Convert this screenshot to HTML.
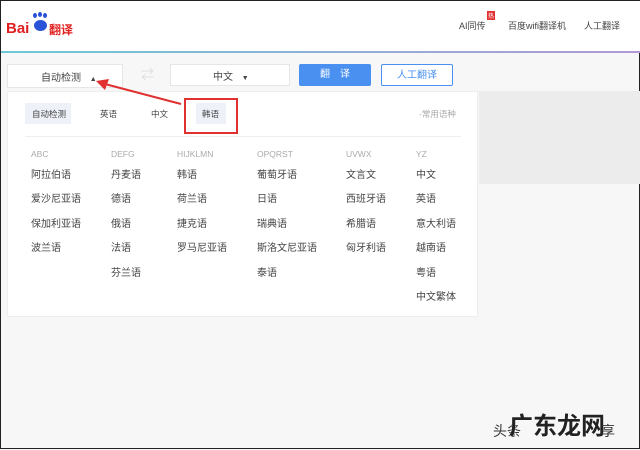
<!DOCTYPE html>
<html><head><meta charset="utf-8"><style>
*{margin:0;padding:0;box-sizing:border-box}
body{width:640px;height:449px;overflow:hidden;background:#f7f7f7;font-family:"Liberation Sans","Noto Sans CJK SC",sans-serif;position:relative;border:1px solid #222}
.a{position:absolute}
.hd{left:0;top:0;width:640px;height:51px;background:#fff}
.line{left:0;top:50px;width:640px;height:2px;background:linear-gradient(90deg,#6cc9d6,#b29ad6)}
.t{font-size:10px;color:#444;white-space:nowrap}
.h{font-size:8.5px;color:#aaa}
</style></head><body>
<div class="a hd"></div><div class="a line"></div>
<div class="a" style="left:5px;top:19px;font-size:15px;font-weight:bold;color:#e02020">Bai</div>
<div class="a" style="left:31px;top:12px;width:16px;height:20px">
<div class="a" style="left:1px;top:0;width:4px;height:5px;border-radius:50%;background:#2a52d8"></div>
<div class="a" style="left:6px;top:-1px;width:4px;height:5px;border-radius:50%;background:#2a52d8"></div>
<div class="a" style="left:11px;top:0;width:4px;height:5px;border-radius:50%;background:#2a52d8"></div>
<div class="a" style="left:2px;top:7px;width:13px;height:11px;border-radius:50%;background:#2a52d8"></div></div>
<div class="a" style="left:48px;top:20px;font-size:12px;font-weight:bold;color:#e02020">翻译</div>
<div class="a t" style="left:458px;top:18px;font-size:9px">AI同传</div>
<div class="a" style="left:486px;top:10px;width:8px;height:9px;background:#e03030;color:#fff;font-size:6px;text-align:center">热</div>
<div class="a t" style="left:507px;top:18px;font-size:9px">百度wifi翻译机</div>
<div class="a t" style="left:583px;top:18px;font-size:9px">人工翻译</div>
<div class="a" style="left:478px;top:90px;width:162px;height:93px;background:#ececec"></div>
<div class="a" style="left:6px;top:63px;width:116px;height:24px;background:#fff;border:1px solid #e6e6e6"></div>
<div class="a t" style="left:40px;top:68px">自动检测 <span style="font-size:7px;margin-left:6px">▲</span></div>
<div class="a" style="left:140px;top:63px;font-size:13px;color:#ddd">⇄</div>
<div class="a" style="left:169px;top:63px;width:120px;height:22px;background:#fff;border:1px solid #e6e6e6"></div>
<div class="a t" style="left:212px;top:67px">中文 <span style="font-size:7px;margin-left:6px">▼</span></div>
<div class="a" style="left:298px;top:63px;width:72px;height:22px;background:#4a90f0;border-radius:2px;color:#fff;font-size:10px;text-align:center;line-height:22px">翻　译</div>
<div class="a" style="left:380px;top:63px;width:72px;height:22px;background:#fff;border:1px solid #4a90f0;border-radius:2px;color:#4a90f0;font-size:10px;text-align:center;line-height:22px">人工翻译</div>
<div class="a" style="left:6px;top:90px;width:471px;height:226px;background:#fff;border:1px solid #eee"></div>
<div class="a" style="left:24px;top:102px;width:46px;height:21px;background:#eef1f8"></div>
<div class="a t" style="left:31px;top:107px;font-size:8.5px">自动检测</div>
<div class="a t" style="left:99px;top:107px;font-size:8.5px">英语</div>
<div class="a t" style="left:150px;top:107px;font-size:8.5px">中文</div>
<div class="a" style="left:195px;top:102px;width:30px;height:21px;background:#eef1f8"></div>
<div class="a t" style="left:201px;top:107px;font-size:8.5px">韩语</div>
<div class="a" style="left:183px;top:97px;width:54px;height:36px;border:2px solid #e03030"></div>
<div class="a h" style="left:418px;top:107px">-常用语种</div>
<div class="a" style="left:24px;top:135px;width:436px;height:1px;background:#eee"></div>
<svg class="a" style="left:0;top:0" width="640" height="449"><line x1="180" y1="103" x2="104" y2="83" stroke="#e03030" stroke-width="2"/><polygon points="95,80 108,78 104,89" fill="#e03030"/></svg>
<div class="a h" style="left:30px;top:148px">ABC</div>
<div class="a h" style="left:110px;top:148px">DEFG</div>
<div class="a h" style="left:176px;top:148px">HIJKLMN</div>
<div class="a h" style="left:256px;top:148px">OPQRST</div>
<div class="a h" style="left:345px;top:148px">UVWX</div>
<div class="a h" style="left:415px;top:148px">YZ</div>
<div class="a t" style="left:30px;top:163px;line-height:24.4px">阿拉伯语<br>爱沙尼亚语<br>保加利亚语<br>波兰语</div>
<div class="a t" style="left:110px;top:163px;line-height:24.4px">丹麦语<br>德语<br>俄语<br>法语<br>芬兰语</div>
<div class="a t" style="left:176px;top:163px;line-height:24.4px">韩语<br>荷兰语<br>捷克语<br>罗马尼亚语</div>
<div class="a t" style="left:256px;top:163px;line-height:24.4px">葡萄牙语<br>日语<br>瑞典语<br>斯洛文尼亚语<br>泰语</div>
<div class="a t" style="left:345px;top:163px;line-height:24.4px">文言文<br>西班牙语<br>希腊语<br>匈牙利语</div>
<div class="a t" style="left:415px;top:163px;line-height:24.4px">中文<br>英语<br>意大利语<br>越南语<br>粤语<br>中文繁体</div>
<div class="a" style="left:492px;top:420px;font-size:14px;color:#333">头条</div>
<div class="a" style="left:508px;top:405px;font-size:24px;color:#222;font-weight:bold;text-shadow:0 0 2px #fff">广东龙网</div>
<div class="a" style="left:600px;top:420px;font-size:14px;color:#333">享</div>
</body></html>
